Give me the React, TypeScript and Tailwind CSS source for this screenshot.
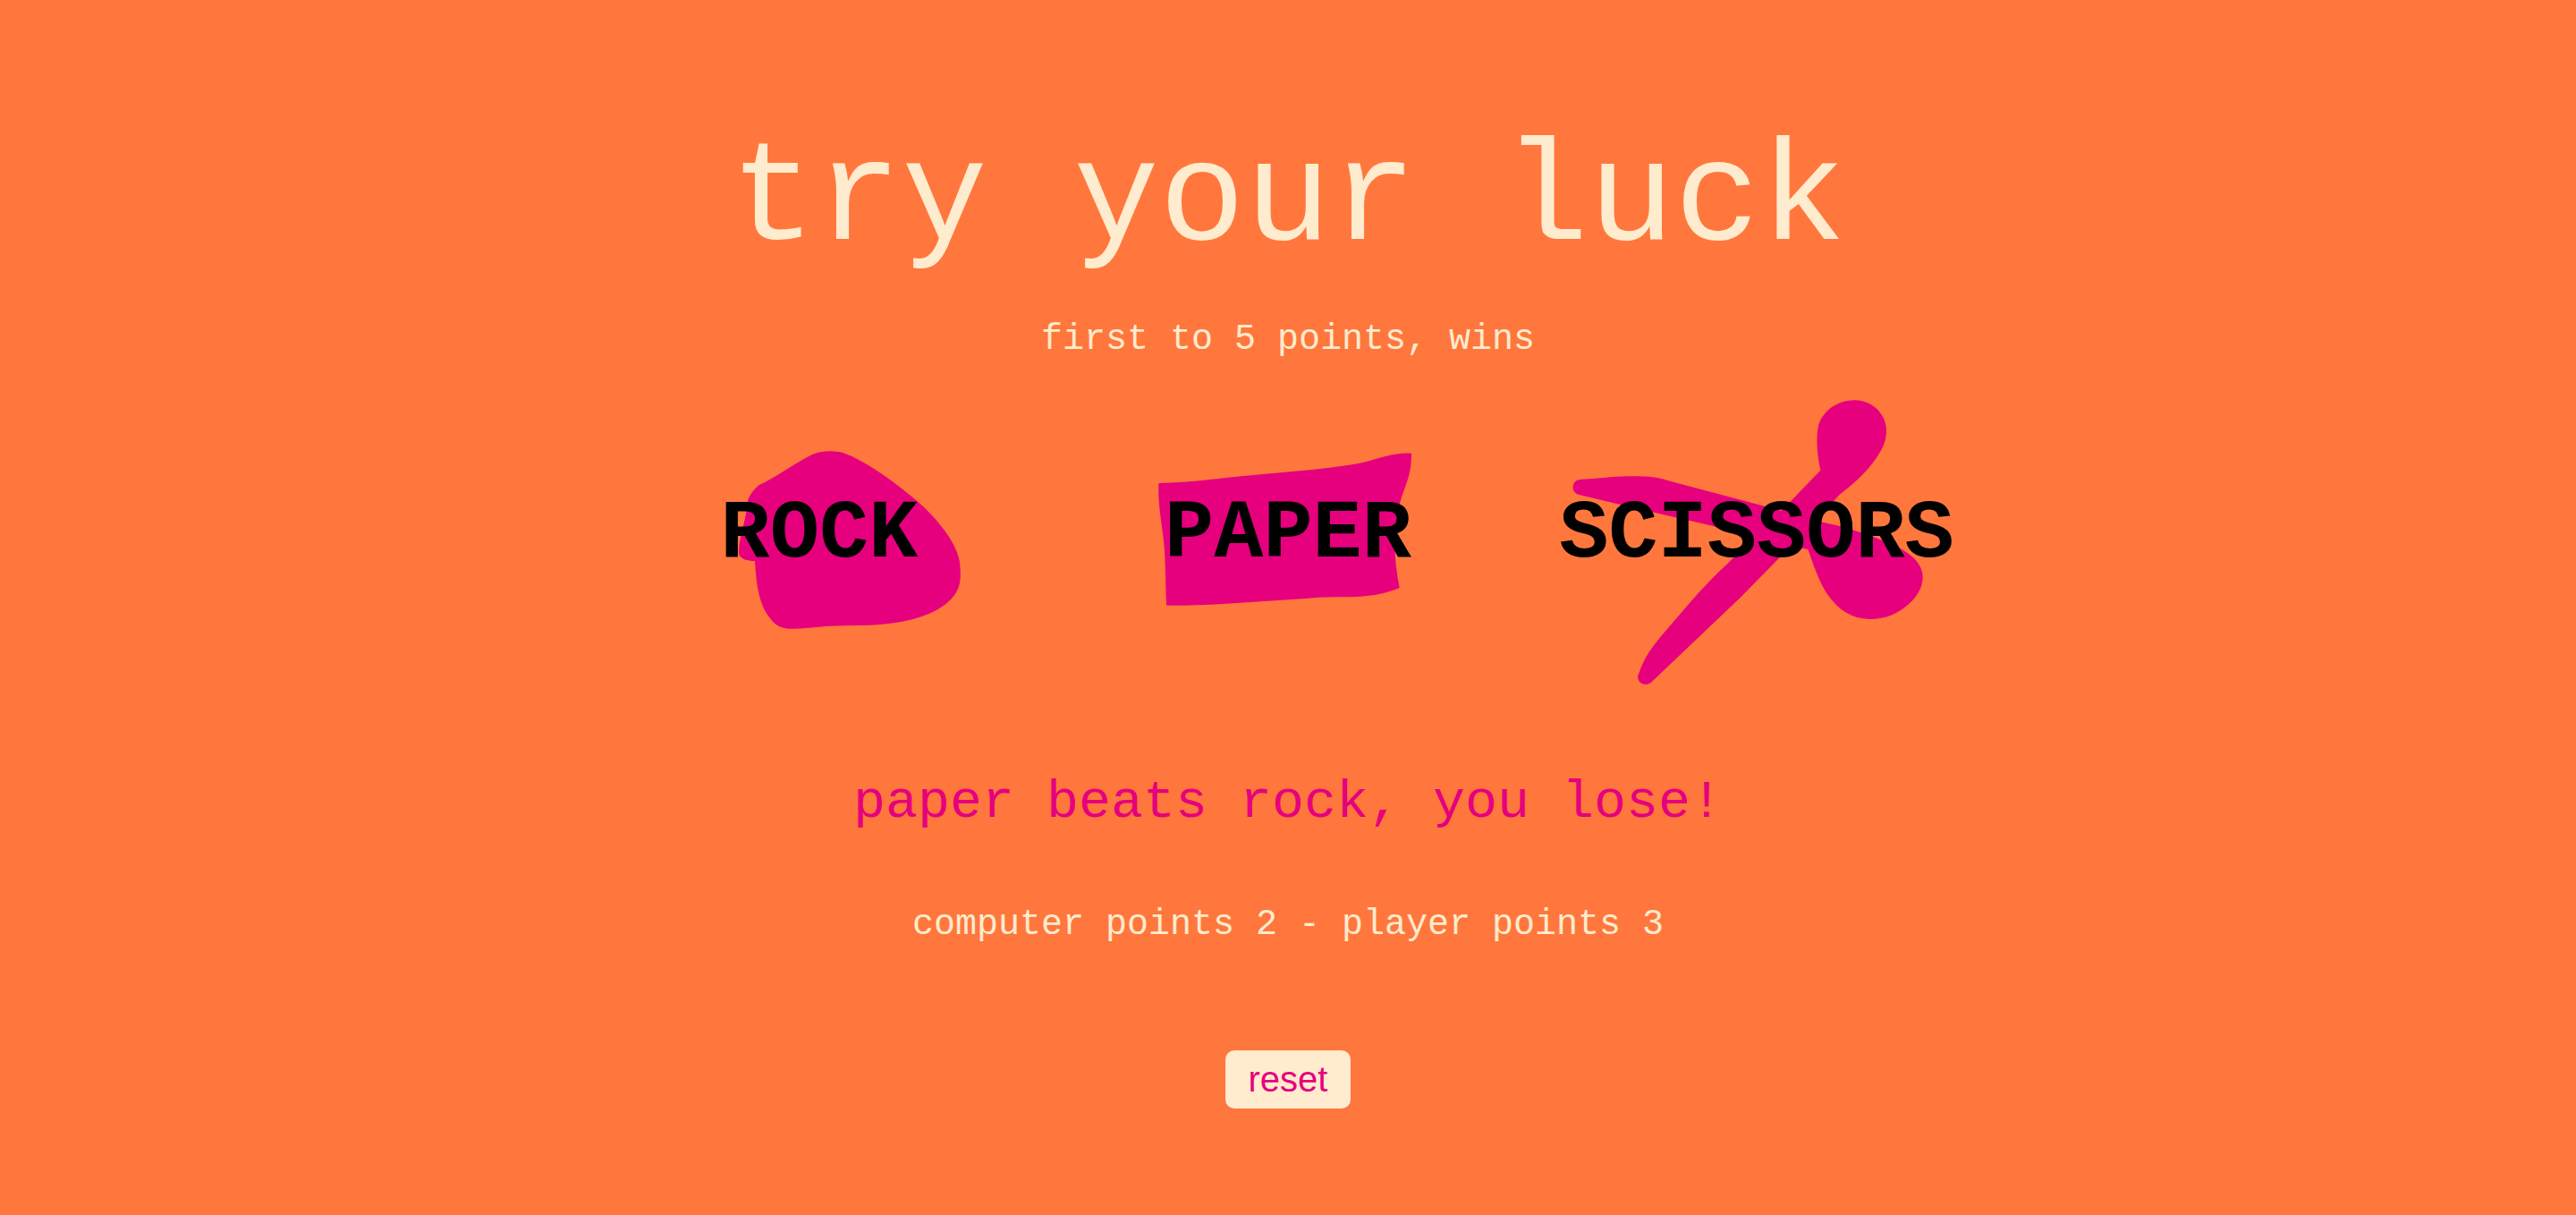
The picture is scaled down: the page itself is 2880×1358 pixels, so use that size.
import { useState } from "react";

const mono = "font-['Liberation_Mono','Courier_New',monospace]";

type Move = "rock" | "paper" | "scissors";

const choices: { move: Move; viewBox: string; paths: string[] }[] = [
  {
    move: "rock",
    viewBox: "-297 -156 1350 1020",
    paths: [
      "M175 187C235 160 318 98 362 81C395 70 438 70 470 83C540 110 640 182 722 254C790 318 838 385 848 440C853 475 852 500 848 520C835 570 785 610 700 634C655 646 600 654 550 656C500 658 450 656 400 660C355 664 310 670 275 668C240 664 228 652 212 632C170 580 166 500 162 442C135 440 112 435 109 418C106 395 113 365 120 335C134 285 134 265 138 240C142 222 156 204 175 187Z",
    ],
  },
  {
    move: "paper",
    viewBox: "-165 -156 1350 1020",
    paths: [
      "M76 180C190 178 290 162 360 156L590 135C640 129 700 123 760 111C800 102 860 77 924 80C926 160 895 200 882 262C860 345 866 440 884 531C830 553 790 560 700 562C660 562 620 562 580 566L330 583C240 588 180 592 102 590C98 490 100 420 90 350C80 270 74 240 76 180Z",
    ],
  },
  {
    move: "scissors",
    viewBox: "27 -6 1350 1020",
    paths: [
      "M107 318C170 315 220 307 290 307C340 307 375 311 400 320L742 411L914 459C965 469 1010 482 1050 495C1110 516 1185 542 1224 577C1248 600 1259 620 1259 648C1258 675 1247 698 1225 723C1180 770 1130 787 1080 786C1020 785 975 756 937 700C910 657 893 607 874 552C800 541 740 519 690 511L547 472L370 431L270 408L107 369C92 364 86 357 86 344C86 330 94 321 107 318Z",
      "M916 287C905 235 902 200 906 154C912 98 965 51 1032 52C1090 53 1137 98 1137 154C1137 190 1125 216 1095 257C1060 304 1020 337 982 367L820 538L650 711L348 998C335 1009 316 1007 307 993C302 984 302 975 308 965C325 915 350 880 386 838L480 728C520 683 560 641 600 604L690 515L800 407Z",
    ],
  },
];

const beats: Record<Move, Move> = { rock: "scissors", paper: "rock", scissors: "paper" };
const moves: Move[] = ["rock", "paper", "scissors"];

export default function App() {
  const [message, setMessage] = useState("paper beats rock, you lose!");
  const [computer, setComputer] = useState(2);
  const [player, setPlayer] = useState(3);

  const play = (move: Move) => {
    if (computer >= 5 || player >= 5) return;
    const other = moves[Math.floor(Math.random() * 3)];
    if (other === move) {
      setMessage("it's a tie!");
    } else if (beats[move] === other) {
      setPlayer(player + 1);
      setMessage(`${move} beats ${other}, you win!`);
    } else {
      setComputer(computer + 1);
      setMessage(`${other} beats ${move}, you lose!`);
    }
  };

  const reset = () => {
    setComputer(0);
    setPlayer(0);
    setMessage("choose your weapon");
  };

  return (
    <main
      className={`${mono} flex min-h-screen flex-col items-center bg-[#ff773d] px-8 pt-[135px] pb-16 text-center text-[#ffebcd]`}
    >
      <h1 className="text-[160px] leading-[180px]">try your luck</h1>
      <p className="mt-[42px] text-[40px] leading-[45px]">first to 5 points, wins</p>

      <div className="mt-[26px] grid w-full max-w-[1572px] grid-cols-3">
        {choices.map(({ move, viewBox, paths }) => (
          <button
            key={move}
            type="button"
            onClick={() => play(move)}
            className="grid cursor-pointer place-items-center"
          >
            <svg
              viewBox={viewBox}
              aria-hidden="true"
              className="col-start-1 row-start-1 w-[450px] max-w-full fill-[#e6007e]"
            >
              {paths.map((d) => (
                <path key={d} d={d} />
              ))}
            </svg>
            <span className="z-10 col-start-1 row-start-1 text-[92px] leading-none font-bold text-black uppercase">
              {move}
            </span>
          </button>
        ))}
      </div>

      <p className="mt-[95px] text-[60px] leading-[68px] text-[#e6007e]" aria-live="polite">
        {message}
      </p>
      <p className="mt-20 text-[40px] leading-[45px]">
        computer points {computer} - player points {player}
      </p>
      <button
        type="button"
        onClick={reset}
        className="mt-[118px] cursor-pointer rounded-[10px] bg-[#ffebcd] px-[26px] py-[10px] font-['Liberation_Sans',Arial,sans-serif] text-[40px] leading-[45px] text-[#e6007e]"
      >
        reset
      </button>
    </main>
  );
}
